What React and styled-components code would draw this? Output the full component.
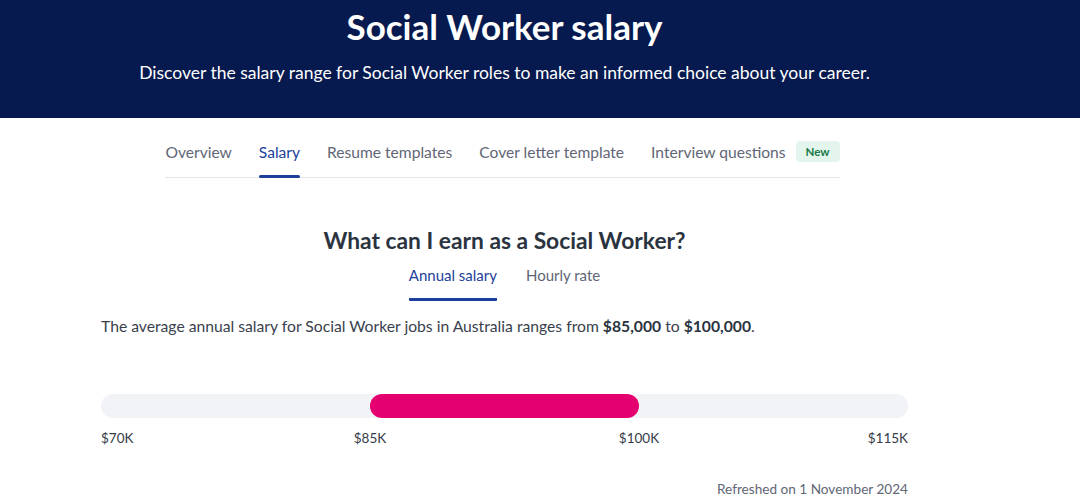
import React from 'react';
import styled, { createGlobalStyle } from 'styled-components';

const GlobalStyle = createGlobalStyle`
  body {
    margin: 0;
    background: #fff;
    font-family: Lato, "Open Sans", sans-serif;
  }
`;

const Hero = styled.header`
  background: #061a4f;
  color: #fff;
  height: 118px;
  box-sizing: border-box;
  padding-top: 6px;
`;

const HeroInner = styled.div`
  width: 807px;
  margin-left: 101px;
  text-align: center;
`;

const HeroTitle = styled.h1`
  margin: 0;
  font-size: 35px;
  font-weight: 700;
  line-height: 40px;
`;

const HeroText = styled.p`
  margin: 15px 0 0;
  font-size: 17.5px;
  line-height: 24px;
  white-space: nowrap;
`;

const Container = styled.main`
  width: 807px;
  margin-left: 101px;
  display: flex;
  flex-direction: column;
  align-items: center;
`;

const Tabs = styled.nav`
  display: flex;
  align-items: center;
  gap: 27px;
  border-bottom: 1px solid #e3e5ea;
  height: 60px;
  box-sizing: border-box;
  padding-top: 8px;
  margin-left: -4px;
`;

const Tab = styled.a`
  position: relative;
  height: 100%;
  display: flex;
  align-items: center;
  font-size: 15.6px;
  color: ${p => (p.$active ? '#1c3f9b' : '#5f6675')};
  &::after {
    content: '';
    display: ${p => (p.$active ? 'block' : 'none')};
    position: absolute;
    left: 0;
    right: 0;
    bottom: -1px;
    height: 3px;
    border-radius: 2px;
    background: #1c3f9b;
  }
`;

const Badge = styled.span`
  margin-left: -17px;
  background: #e3f5ec;
  color: #177a48;
  font-size: 11.5px;
  font-weight: 700;
  padding: 4px 10px;
  border-radius: 4px;
`;

const Heading = styled.h2`
  margin: 48px 0 0;
  font-size: 22.8px;
  font-weight: 700;
  color: #2b3340;
  line-height: 28px;
`;

const SubTabs = styled.div`
  display: flex;
  gap: 29px;
  margin-top: 8px;
`;

const SubTab = styled.span`
  padding: 4px 0 14px;
  font-size: 15px;
  color: ${p => (p.$active ? '#1c3f9b' : '#5f6675')};
  border-bottom: 3px solid ${p => (p.$active ? '#1c3f9b' : 'transparent')};
  border-radius: 1px;
`;

const Summary = styled.p`
  align-self: stretch;
  margin: 14px 0 0;
  font-size: 15.7px;
  line-height: 22px;
  color: #3a414d;
  b {
    color: #2b3340;
  }
`;

const Chart = styled.div`
  align-self: stretch;
  margin-top: 57px;
`;

const Track = styled.div`
  position: relative;
  height: 24px;
  border-radius: 12px;
  background: #f2f3f6;
`;

const Range = styled.div`
  position: absolute;
  top: 0;
  bottom: 0;
  border-radius: 12px;
  background: #e5006f;
`;

const Labels = styled.div`
  display: grid;
  grid-template-columns: repeat(6, 1fr);
  margin-top: 12px;
  font-size: 13.5px;
  color: #343b47;
`;

const Label = styled.span`
  grid-column: ${p => p.$col};
  justify-self: ${p => p.$align};
`;

const Refreshed = styled.p`
  align-self: flex-end;
  margin: 35px 0 0;
  font-size: 13.6px;
  color: #5f6675;
`;

const ticks = [
  { text: '$70K', col: '1 / 2', align: 'start' },
  { text: '$85K', col: '2 / 4', align: 'center' },
  { text: '$100K', col: '4 / 6', align: 'center' },
  { text: '$115K', col: '6 / 7', align: 'end' },
];

const App = () => {
  const min = 70000;
  const max = 115000;
  const low = 85000;
  const high = 100000;
  return (
    <>
      <GlobalStyle />
      <Hero>
        <HeroInner>
          <HeroTitle>Social Worker salary</HeroTitle>
          <HeroText>Discover the salary range for Social Worker roles to make an informed choice about your career.</HeroText>
        </HeroInner>
      </Hero>
      <Container>
        <Tabs>
          <Tab>Overview</Tab>
          <Tab $active>Salary</Tab>
          <Tab>Resume templates</Tab>
          <Tab>Cover letter template</Tab>
          <Tab>Interview questions</Tab>
          <Badge>New</Badge>
        </Tabs>
        <Heading>What can I earn as a Social Worker?</Heading>
        <SubTabs>
          <SubTab $active>Annual salary</SubTab>
          <SubTab>Hourly rate</SubTab>
        </SubTabs>
        <Summary>
          The average annual salary for Social Worker jobs in Australia ranges from <b>$85,000</b> to <b>$100,000</b>.
        </Summary>
        <Chart>
          <Track>
            <Range
              style={{
                left: `${((low - min) / (max - min)) * 100}%`,
                width: `${((high - low) / (max - min)) * 100}%`,
              }}
            />
          </Track>
          <Labels>
            {ticks.map(t => (
              <Label key={t.text} $col={t.col} $align={t.align}>{t.text}</Label>
            ))}
          </Labels>
        </Chart>
        <Refreshed>Refreshed on 1 November 2024</Refreshed>
      </Container>
    </>
  );
};

export default App;
